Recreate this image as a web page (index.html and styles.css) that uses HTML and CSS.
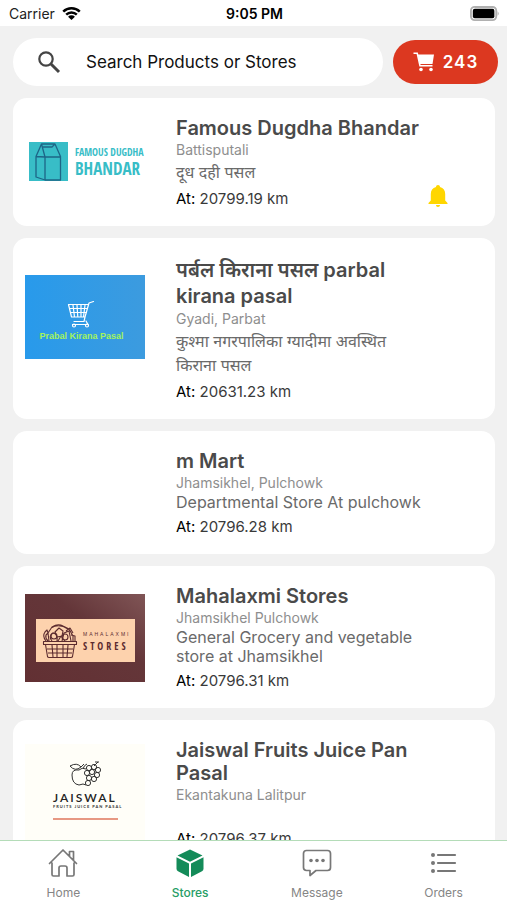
FILE: index.html
```html
<!DOCTYPE html>
<html lang="en">
<head>
<meta charset="utf-8">
<meta name="viewport" content="width=device-width, initial-scale=1">
<title>Stores</title>
<link rel="stylesheet" href="styles.css">
</head>
<body>
<div class="app">
  <header class="status">
    <div class="status-left">
      <span>Carrier</span>
      <svg class="wifi" viewBox="0 0 20 15" aria-hidden="true"><path d="M1.3 5.6a12.4 12.4 0 0 1 17.4 0M4.4 8.7a8 8 0 0 1 11.2 0" fill="none" stroke="#000" stroke-width="2.6"/><path d="M10 14.4 6.4 10.9a5.2 5.2 0 0 1 7.2 0z"/></svg>
    </div>
    <strong class="clock">9:05 PM</strong>
    <div class="status-right">
      <svg class="battery" viewBox="0 0 32 16" aria-hidden="true"><rect x="1" y="1" width="27" height="14" rx="4" fill="#fff" stroke="#b0b0b0" stroke-width="2"/><rect x="3" y="3" width="23" height="10" rx="2"/><path d="M29.500 5.500q2 2.500 0 5z" fill="#a0a0a0"/></svg>
    </div>
  </header>

  <div class="toolbar">
    <label class="search">
      <svg class="search-icon" viewBox="0 0 24 24" role="img" aria-label="Search"><circle cx="9" cy="9" r="6.700" fill="none" stroke="#444" stroke-width="2.200"/><path d="m14 14 8 8" stroke="#444" stroke-width="3"/></svg>
      <input type="text" placeholder="Search Products or Stores">
    </label>
    <button class="cart" type="button" aria-label="Cart, 243 items">
      <svg class="cart-icon" viewBox="0 0 22 20" aria-hidden="true"><path d="M.5 1.200h3.700l2.800 12.600h12.500" fill="none" stroke="#fff" stroke-width="1.600"/><path d="M4.700 2.600H21l-1.500 9.300H6.800z" fill="#fff"/><circle cx="8" cy="17.500" r="1.800" fill="#fff"/><circle cx="18" cy="17.500" r="1.800" fill="#fff"/></svg>
      <span>243</span>
    </button>
  </div>

  <main class="stores">
    <article class="card">
      <svg class="logo" viewBox="0 0 120 84" role="img" aria-label="Famous Dugdha Bhandar">
        <rect x="4" y="21" width="39" height="39" fill="#38bdc7"/>
        <path d="M11 35.500 16.500 23H30l5.500 12.500V59H20l-9-3zM11 35.500l9 .5h15.500M20 36v23M16.500 23 20 36M30 23l-3 3H17.500" fill="none" stroke="#1d6587" stroke-width="1.300" stroke-linejoin="round"/>
        <text class="milk-small" x="50" y="35">FAMOUS DUGDHA</text>
        <text class="milk-big" x="50" y="54">BHANDAR</text>
      </svg>
      <div class="info">
        <h2>Famous Dugdha Bhandar</h2>
        <p class="place">Battisputali</p>
        <p class="about nepali" lang="ne">दूध दही पसल</p>
        <p class="distance"><b>At:</b> 20799.19 km</p>
      </div>
      <svg class="bell" viewBox="0 0 20 24" role="img" aria-label="Notifications on"><path d="M10 1c1.200 0 2 .8 2 2 3.500 1 5.200 3.600 5.200 7v6.500L19.500 19v1H.5v-1l2.300-2.500V10c0-3.400 1.700-6 5.200-7 0-1.200.8-2 2-2zM8 21h4c0 1.200-.8 2-2 2s-2-.8-2-2z" fill="#ffd600"/></svg>
    </article>

    <article class="card">
      <svg class="logo raised" viewBox="0 0 120 84" role="img" aria-label="Prabal Kirana Pasal">
        <defs><linearGradient id="sky"><stop stop-color="#289aeb"/><stop offset="1" stop-color="#3c9bdf"/></linearGradient></defs>
        <rect width="120" height="84" fill="url(#sky)"/>
        <g fill="none" stroke="#fff" stroke-width="1.200" stroke-linecap="round" stroke-linejoin="round">
          <path d="M68.500 26.500 64 28l-4 14H46.500l-3-12.500h20M44.500 33.500h18M45.500 37.500h16M48 30l1.500 12M52 30l.8 12M56 30v12M60 30l-1.500 12M60 42l-1 4.500H49M61 46l2 3.500H47.500"/>
          <circle cx="49" cy="50.500" r="1.500"/><circle cx="62" cy="50.500" r="1.500"/>
        </g>
        <text class="kirana" x="56.500" y="64" text-anchor="middle">Prabal Kirana Pasal</text>
      </svg>
      <div class="info">
        <h2 class="nepali" lang="ne">पर्बल किराना पसल parbal kirana pasal</h2>
        <p class="place">Gyadi, Parbat</p>
        <p class="about nepali" lang="ne">कुश्मा नगरपालिका ग्यादीमा अवस्थित किराना पसल</p>
        <p class="distance"><b>At:</b> 20631.23 km</p>
      </div>
    </article>

    <article class="card">
      <div class="logo"></div>
      <div class="info">
        <h2>m Mart</h2>
        <p class="place">Jhamsikhel, Pulchowk</p>
        <p class="about">Departmental Store At pulchowk</p>
        <p class="distance"><b>At:</b> 20796.28 km</p>
      </div>
    </article>

    <article class="card">
      <svg class="logo" viewBox="0 0 120 88" role="img" aria-label="Mahalaxmi Stores">
        <defs><linearGradient id="wine" x1="0" y1="1" x2="1" y2="0"><stop stop-color="#623033"/><stop offset=".6" stop-color="#643639"/><stop offset="1" stop-color="#805556"/></linearGradient></defs>
        <rect width="120" height="88" fill="url(#wine)"/>
        <rect x="11" y="25" width="99" height="43" fill="#fdd2ad"/>
        <g fill="none" stroke="#5c2b2f" stroke-width="1.100" stroke-linejoin="round">
          <path d="M18.500 47.500h33v3h-33zM20.500 50.500l2 12q.3 1 1.500 1h22q1.200 0 1.500-1l2-12M22 55h26M23 59h24M27 51l1 12M32 51v12M38 51v12M43 51l-1 12"/>
          <path d="M21 47q-4-5-1-9l2-2 1 3-2 2q-1 3 2 6M24 47l-1-8 4-6q6-4 11-1l6 3 4 7v5M26 34q8-5 17 1M27 47q-4-5 1-8 5 1 4 8M30 38l4-4 4 3-1 5-5 1zM37 47l2-8 5-2 2 10M41 37l4-3 3 5M33 47l3-5 4 5M46 41l4 1v5"/>
          <circle cx="29" cy="42" r="3"/><circle cx="40" cy="43" r="3"/>
        </g>
        <text class="maha-small" x="58" y="42">MAHALAXMI</text>
        <text class="maha-big" x="58" y="56">STORES</text>
      </svg>
      <div class="info">
        <h2>Mahalaxmi Stores</h2>
        <p class="place">Jhamsikhel Pulchowk</p>
        <p class="about">General Grocery and vegetable store at Jhamsikhel</p>
        <p class="distance"><b>At:</b> 20796.31 km</p>
      </div>
    </article>

    <article class="card">
      <svg class="logo" viewBox="0 0 120 100" role="img" aria-label="Jaiswal Fruits Juice Pan Pasal">
        <rect width="120" height="100" fill="#fffef8"/>
        <g fill="none" stroke="#333" stroke-width="1">
          <path d="M61 25q-4-2-7 1-7-1-7 5 0 9 7 10l4-1 3 1M45 22q7-4 11 1-6 5-11-1zM56 23l3-3M58 25q1-4 4-5M69 22l4-4m-3 0h4"/>
          <circle cx="64" cy="24" r="2.600"/><circle cx="69" cy="23" r="2.600"/><circle cx="73" cy="26" r="2.600"/><circle cx="62" cy="29" r="2.600"/><circle cx="67" cy="28" r="2.600"/><circle cx="72" cy="31" r="2.600"/><circle cx="64" cy="34" r="2.600"/><circle cx="69" cy="35" r="2.600"/><circle cx="63" cy="39" r="2.600"/>
        </g>
        <text class="jais-big" x="28" y="58">JAISWAL</text>
        <text class="jais-small" x="28" y="64">FRUITS JUICE PAN PASAL</text>
        <path d="M28 75h65" stroke="#df765c" stroke-width="1.600"/>
      </svg>
      <div class="info">
        <h2>Jaiswal Fruits Juice Pan Pasal</h2>
        <p class="place">Ekantakuna Lalitpur</p>
        <p class="about"></p>
        <p class="distance"><b>At:</b> 20796.37 km</p>
      </div>
    </article>
  </main>

  <nav class="tabs">
    <a href="#home">
      <svg viewBox="0 0 30 30" aria-hidden="true"><path d="M4 15v11.500q0 1.500 1.500 1.500H11v-8q0-2 2-2h4q2 0 2 2v8h5.500q1.500 0 1.500-1.500V15M1.500 15.500 15 2l13.500 13.500M21.500 8V3.500h4v9" fill="none" stroke="#777" stroke-width="1.700" stroke-linejoin="round" stroke-linecap="round"/></svg>
      <span>Home</span>
    </a>
    <a href="#stores" class="active" aria-current="page">
      <svg viewBox="0 0 30 30" aria-hidden="true"><path d="m15 1.500 12.500 6L15 13.800 2.500 7.500zM1.500 9.300 14 15.600V29L3 23.200q-1.500-.8-1.500-2.500zM28.500 9.300 16 15.600V29l11-5.800q1.500-.8 1.500-2.500z" fill="#148b59"/></svg>
      <span>Stores</span>
    </a>
    <a href="#message">
      <svg viewBox="0 0 30 30" aria-hidden="true"><path d="M4.500 2.500h21q3 0 3 3v14q0 3-3 3H14l-6 5v-5H4.500q-3 0-3-3v-14q0-3 3-3z" fill="none" stroke="#777" stroke-width="1.700" stroke-linejoin="round"/><g fill="#777"><circle cx="9" cy="12.500" r="1.800"/><circle cx="15" cy="12.500" r="1.800"/><circle cx="21" cy="12.500" r="1.800"/></g></svg>
      <span>Message</span>
    </a>
    <a href="#orders">
      <svg viewBox="0 0 30 30" aria-hidden="true"><path d="M9 7h17M9 15h17M9 23h17" stroke="#777" stroke-width="2.200" stroke-linecap="round"/><g fill="#777"><circle cx="4" cy="7" r="2"/><circle cx="4" cy="15" r="2"/><circle cx="4" cy="23" r="2"/></g></svg>
      <span>Orders</span>
    </a>
  </nav>
</div>
</body>
</html>
```
FILE: styles.css
```css
* { box-sizing: border-box; }

body {
  margin: 0;
  background: #f1f1f1;
  font-family: Inter, "Noto Sans", "Noto Sans Devanagari", sans-serif;
  color: #000;
}

.app {
  display: flex;
  flex-direction: column;
  height: 100vh;
}

.status {
  display: grid;
  grid-template-columns: 1fr auto 1fr;
  align-items: center;
  height: 26px;
  padding: 1px 7px 0 9px;
  background: #fff;
  font-size: 14px;
  flex: none;
}

.status-left { display: flex; align-items: center; gap: 7px; color: #222; }
.status-right { display: flex; justify-content: flex-end; }
.clock { font-weight: 600; }
.wifi { width: 19px; height: 15px; }
.battery { width: 30px; height: 15px; }

.toolbar {
  display: flex;
  align-items: center;
  gap: 10px;
  padding: 12px 9px 12px 13px;
  flex: none;
}

.search {
  display: flex;
  align-items: center;
  gap: 25px;
  flex: 1;
  min-width: 0;
  height: 48px;
  padding: 0 24px;
  border-radius: 24px;
  background: #fff;
}

.search-icon { width: 24px; height: 24px; flex: none; }

.search input {
  flex: 1;
  min-width: 0;
  padding: 0;
  border: 0;
  outline: 0;
  background: none;
  font: 400 17px Inter, sans-serif;
  color: #111;
}

.search input::placeholder { color: #111; opacity: 1; }

.cart {
  display: flex;
  align-items: center;
  justify-content: center;
  gap: 8px;
  width: 105px;
  height: 44px;
  padding: 0;
  border: 0;
  border-radius: 22px;
  background: #dc3820;
  color: #fff;
  font: 600 17px Inter, sans-serif;
  letter-spacing: 1px;
}

.cart-icon { width: 22px; height: 20px; }

.stores {
  display: flex;
  flex-direction: column;
  gap: 12px;
  flex: 1;
  min-height: 0;
  padding: 0 12px 0 13px;
  overflow: hidden;
}

.card {
  display: grid;
  grid-template-columns: 120px 1fr 22px;
  align-items: center;
  flex: none;
  padding: 19px 45px 18px 12px;
  border-radius: 14px;
  background: #fff;
}

.logo { display: block; width: 120px; }
.raised { align-self: start; margin-top: 18px; }
.info { padding: 0 3px 0 31px; }
.bell { width: 20px; height: 24px; align-self: end; }

h2, p { margin: 0; }

h2 {
  font-size: 20px;
  line-height: 23px;
  font-weight: 600;
  color: #4a4a4a;
}

h2.nepali { line-height: 26px; }
.place { font-size: 14px; line-height: 19px; color: #8e8e8e; }

.about {
  min-height: 19px;
  margin: 1px 0 5px;
  font-size: 16px;
  line-height: 19px;
  color: #6a6a6a;
}

.about.nepali { line-height: 24px; }
.distance { font-size: 15px; line-height: 19px; color: #3a3a3a; }
.distance b { font-weight: 400; color: #000; }

.milk-small { font: 700 10px "Open Sans Condensed", "Liberation Sans Narrow", sans-serif; fill: #38bdc7; }
.milk-big { font: 700 17px "Open Sans Condensed", "Liberation Sans Narrow", sans-serif; fill: #38bdc7; }
.kirana { font: 700 9px "Liberation Sans", sans-serif; fill: #a4f35c; }
.maha-small { font: 400 5px "Liberation Sans", sans-serif; letter-spacing: 2px; fill: #5c2b2f; }
.maha-big { font: 700 10px "Open Sans Condensed", sans-serif; letter-spacing: 3px; fill: #5c2b2f; }
.jais-big { font: 600 12px Lato, sans-serif; letter-spacing: 2px; fill: #222; }
.jais-small { font: 700 4px Lato, sans-serif; letter-spacing: 1px; fill: #333; }

.tabs {
  display: grid;
  grid-template-columns: repeat(4, 1fr);
  flex: none;
  height: 60px;
  border-top: 1px solid #b4dcb8;
  background: #fff;
}

.tabs a {
  display: flex;
  flex-direction: column;
  align-items: center;
  gap: 7px;
  padding-top: 7px;
  color: #858585;
  font-size: 12px;
  line-height: 16px;
  text-decoration: none;
}

.tabs svg { width: 30px; height: 30px; }
.tabs .active { color: #279d66; font-weight: 500; }
```
